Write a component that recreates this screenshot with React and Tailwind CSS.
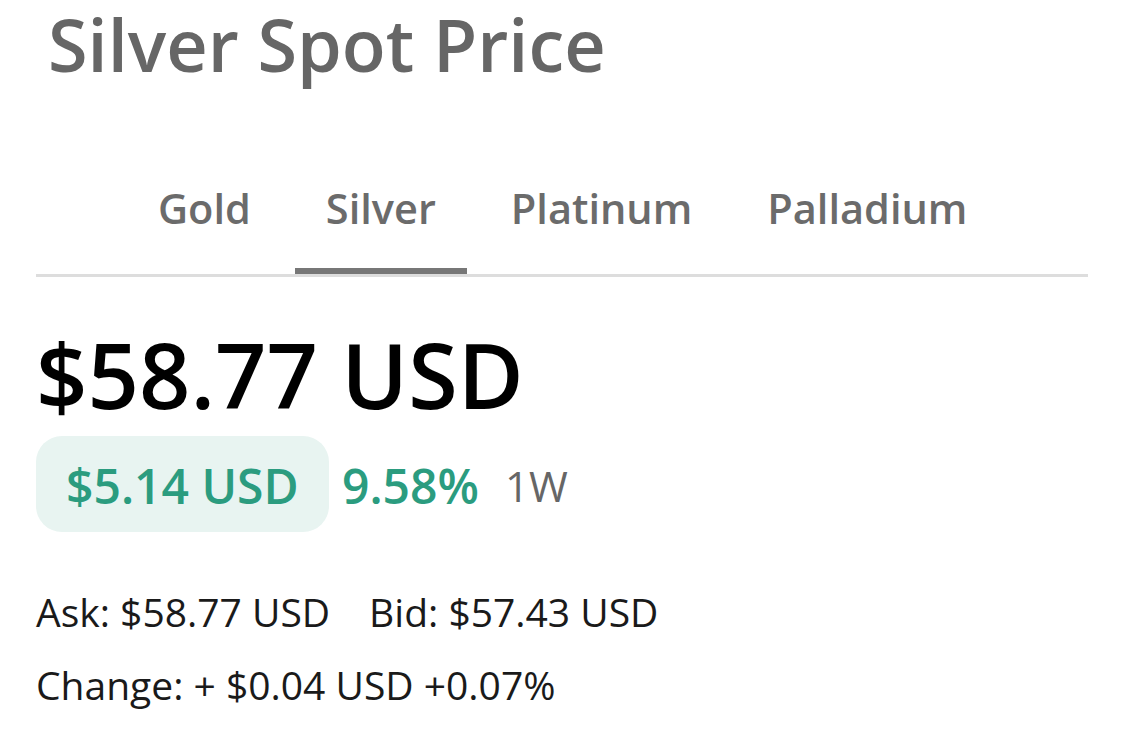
export default function App() {
  const tabs = ["Gold", "Silver", "Platinum", "Palladium"];
  const active = "Silver";

  return (
    <div className="min-h-screen bg-white pl-[36px] pr-[37px] font-['Open_Sans',sans-serif]">
      {/* Title */}
      <h1 className="pt-[1px] pl-[12px] text-[72px] leading-[1.2] font-semibold text-[#666666]">
        Silver Spot Price
      </h1>

      {/* Metal tabs */}
      <div className="mt-[101px] flex gap-[13px] pl-[91px] border-b-[3px] border-[#dddddd]">
        {tabs.map((t) => (
          <div
            key={t}
            className={`px-[31px] pb-[38px] text-[41.5px] leading-none font-semibold text-[#6b6b6b] border-b-[6px] ${
              t === active ? "border-[#777777]" : "border-transparent"
            }`}
          >
            {t}
          </div>
        ))}
      </div>

      {/* Price */}
      <div className="mt-[52px] text-[90px] leading-none font-semibold text-black">$58.77 USD</div>

      {/* Weekly change */}
      <div className="mt-[17px] flex items-center">
        <div className="h-[96px] w-[293px] rounded-[26px] bg-[#e8f4f1] flex items-center pl-[30px] pt-[4px] text-[48px] leading-none font-semibold text-[#2b9c7f]">
          $5.14 USD
        </div>
        <span className="ml-[13px] mt-[4px] text-[48px] leading-none font-semibold text-[#2b9c7f]">9.58%</span>
        <span className="ml-[26px] mt-[4px] text-[42px] leading-none text-[#666666]">1W</span>
      </div>

      {/* Ask / Bid */}
      <div className="mt-[60px] flex gap-[39px] text-[39px] leading-none text-[#1a1a1a]">
        <span>Ask: $58.77 USD</span>
        <span>Bid: $57.43 USD</span>
      </div>
      <div className="mt-[34px] text-[39px] leading-none text-[#1a1a1a]">Change: + $0.04 USD +0.07%</div>
    </div>
  );
}
